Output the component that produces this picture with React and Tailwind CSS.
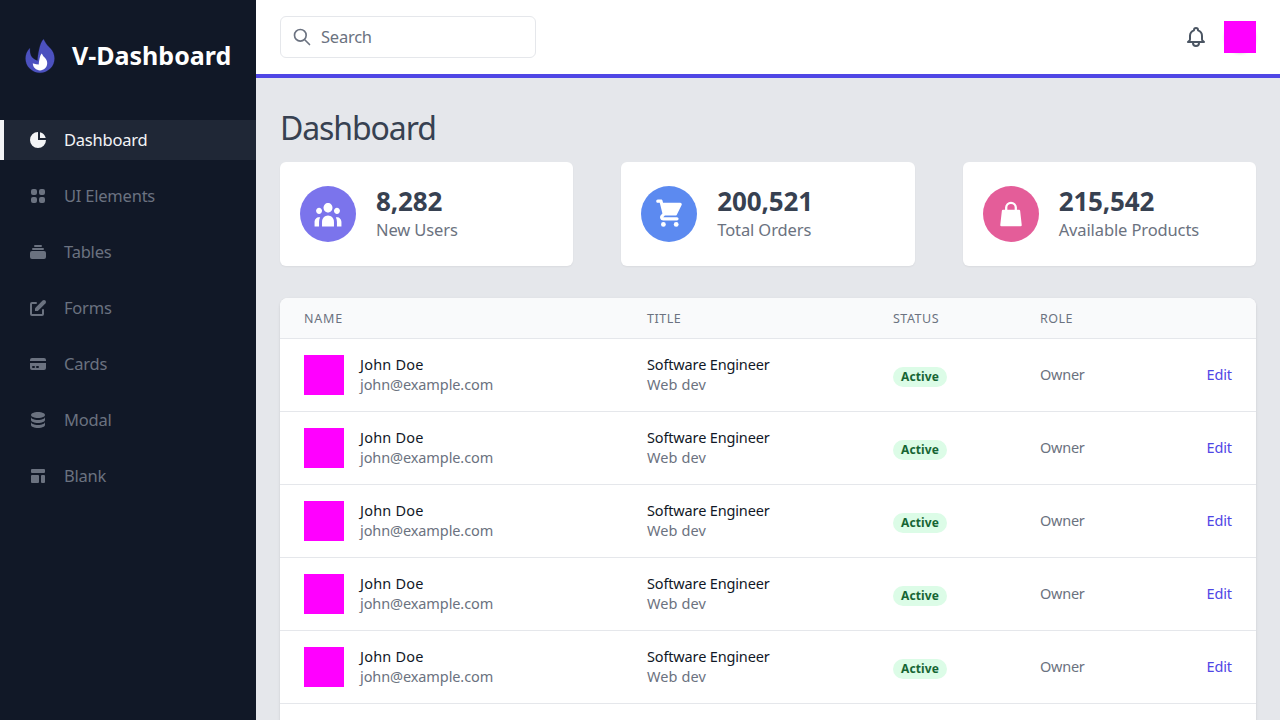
import React from 'react'

const navItems = [
  {
    label: 'Dashboard',
    active: true,
    paths: ['M2 10a8 8 0 018-8v8h8a8 8 0 11-16 0z', 'M12 2.252A8.014 8.014 0 0117.748 8H12V2.252z'],
  },
  {
    label: 'UI Elements',
    paths: [
      'M5 3a2 2 0 00-2 2v2a2 2 0 002 2h2a2 2 0 002-2V5a2 2 0 00-2-2H5zM5 11a2 2 0 00-2 2v2a2 2 0 002 2h2a2 2 0 002-2v-2a2 2 0 00-2-2H5zM11 5a2 2 0 012-2h2a2 2 0 012 2v2a2 2 0 01-2 2h-2a2 2 0 01-2-2V5zM11 13a2 2 0 012-2h2a2 2 0 012 2v2a2 2 0 01-2 2h-2a2 2 0 01-2-2v-2z',
    ],
  },
  {
    label: 'Tables',
    paths: [
      'M7 3a1 1 0 000 2h6a1 1 0 100-2H7zM4 7a1 1 0 011-1h10a1 1 0 110 2H5a1 1 0 01-1-1zM2 11a2 2 0 012-2h12a2 2 0 012 2v4a2 2 0 01-2 2H4a2 2 0 01-2-2v-4z',
    ],
  },
  {
    label: 'Forms',
    paths: [
      'M17.414 2.586a2 2 0 00-2.828 0L7 10.172V13h2.828l7.586-7.586a2 2 0 000-2.828z',
      'M2 6a2 2 0 012-2h4a1 1 0 010 2H4v10h10v-4a1 1 0 112 0v4a2 2 0 01-2 2H4a2 2 0 01-2-2V6z',
    ],
  },
  {
    label: 'Cards',
    paths: [
      'M4 4a2 2 0 00-2 2v1h16V6a2 2 0 00-2-2H4z',
      'M18 9H2v5a2 2 0 002 2h12a2 2 0 002-2V9zM4 13a1 1 0 011-1h1a1 1 0 110 2H5a1 1 0 01-1-1zm5-1a1 1 0 100 2h1a1 1 0 100-2H9z',
    ],
  },
  {
    label: 'Modal',
    paths: [
      'M3 12v3c0 1.657 3.134 3 7 3s7-1.343 7-3v-3c0 1.657-3.134 3-7 3s-7-1.343-7-3z',
      'M3 7v3c0 1.657 3.134 3 7 3s7-1.343 7-3V7c0 1.657-3.134 3-7 3S3 8.657 3 7z',
      'M17 5c0 1.657-3.134 3-7 3S3 6.657 3 5s3.134-3 7-3 7 1.343 7 3z',
    ],
  },
  {
    label: 'Blank',
    paths: [
      'M3 4a1 1 0 011-1h12a1 1 0 011 1v2a1 1 0 01-1 1H4a1 1 0 01-1-1V4zM3 10a1 1 0 011-1h6a1 1 0 011 1v6a1 1 0 01-1 1H4a1 1 0 01-1-1v-6zM14 9a1 1 0 00-1 1v6a1 1 0 001 1h2a1 1 0 001-1v-6a1 1 0 00-1-1h-2z',
    ],
  },
]

function Sidebar() {
  return (
    <aside className="w-64 shrink-0 bg-[#111827]">
      <div className="mt-8 flex items-center pl-4">
        <svg className="h-12 w-12" viewBox="0 0 512 512" fill="none">
          <path
            d="M364.61 390.213C304.625 450.196 207.37 450.196 147.386 390.213C117.394 360.22 102.398 320.911 102.398 281.6C102.398 242.291 117.394 202.981 147.386 172.989C147.386 230.4 153.6 281.6 230.4 307.2C230.4 256 256 102.4 294.4 76.7999C320 128 334.618 142.997 364.608 172.989C394.601 202.981 409.597 242.291 409.597 281.6C409.597 320.911 394.601 360.22 364.61 390.213Z"
            fill="#4C51BF"
            stroke="#4C51BF"
            strokeWidth="2"
          />
          <path
            d="M201.694 387.105C231.686 417.098 280.312 417.098 310.305 387.105C325.301 372.109 332.8 352.456 332.8 332.8C332.8 313.144 325.301 293.491 310.305 278.495C295.309 263.498 288 256 275.2 230.4C256 243.2 243.201 320 243.201 345.6C201.694 345.6 179.2 332.8 179.2 332.8C179.2 352.456 186.698 372.109 201.694 387.105Z"
            fill="white"
          />
        </svg>
        <span className="mx-2 pb-0.5 text-[25px] leading-[30px] font-bold text-white">V-Dashboard</span>
      </div>
      <nav className="mt-10 flex flex-col gap-4">
        {navItems.map((item) => (
          <a
            key={item.label}
            className={
              item.active
                ? 'flex items-center border-l-4 border-[#f3f4f6] bg-[#4b5563]/25 px-6 py-2 text-[#f3f4f6]'
                : 'flex items-center border-l-4 border-[#111827] px-6 py-2 text-[#6b7280]'
            }
          >
            <svg className="h-5 w-5" viewBox="0 0 20 20" fill="currentColor" fillRule="evenodd">
              {item.paths.map((d) => (
                <path key={d} d={d} />
              ))}
            </svg>
            <span className="mx-4 text-[16.5px] leading-6 tracking-[-0.22px]">{item.label}</span>
          </a>
        ))}
      </nav>
    </aside>
  )
}

function Header() {
  return (
    <header className="flex items-center justify-between border-b-4 border-[#4f46e5] bg-white px-6 py-4">
      <div className="flex w-64 items-center rounded-md border border-[#e5e7eb] py-2 pl-[11px]">
        <svg className="h-5 w-5 text-[#6b7280]" viewBox="0 0 24 24" fill="none">
          <path
            d="M21 21L15 15M17 10C17 13.866 13.866 17 10 17C6.13401 17 3 13.866 3 10C3 6.13401 6.13401 3 10 3C13.866 3 17 6.13401 17 10Z"
            stroke="currentColor"
            strokeWidth="2"
            strokeLinecap="round"
            strokeLinejoin="round"
          />
        </svg>
        <span className="ml-[9px] text-[16.5px] leading-6 tracking-[-0.24px] text-[#6b7280]">Search</span>
      </div>
      <div className="flex items-center">
        <svg className="mx-4 h-6 w-6 text-[#4b5563]" viewBox="0 0 24 24" fill="none">
          <path
            d="M15 17H20L18.5951 15.5951C18.2141 15.2141 18 14.6973 18 14.1585V11C18 8.38757 16.3304 6.16509 14 5.34142V5C14 3.89543 13.1046 3 12 3C10.8954 3 10 3.89543 10 5V5.34142C7.66962 6.16509 6 8.38757 6 11V14.1585C6 14.6973 5.78595 15.2141 5.40493 15.5951L4 17H9M15 17V18C15 19.6569 13.6569 21 12 21C10.3431 21 9 19.6569 9 18V17M15 17H9"
            stroke="currentColor"
            strokeWidth="2"
            strokeLinecap="round"
            strokeLinejoin="round"
          />
        </svg>
        <div className="h-8 w-8 rounded-full shadow-[0_1px_3px_0_rgba(0,0,0,0.1),0_1px_2px_-1px_rgba(0,0,0,0.1)]">
          <div className="h-8 w-8 bg-[#ff00ff]" />
        </div>
      </div>
    </header>
  )
}

function UsersIcon() {
  return (
    <svg className="h-8 w-8" viewBox="0 0 28 30" fill="currentColor">
      <path d="M18.2 9.08889C18.2 11.5373 16.3196 13.5222 14 13.5222C11.6804 13.5222 9.79999 11.5373 9.79999 9.08889C9.79999 6.64043 11.6804 4.65556 14 4.65556C16.3196 4.65556 18.2 6.64043 18.2 9.08889Z" />
      <path d="M25.2 12.0444C25.2 13.6768 23.9464 15 22.4 15C20.8536 15 19.6 13.6768 19.6 12.0444C19.6 10.4121 20.8536 9.08889 22.4 9.08889C23.9464 9.08889 25.2 10.4121 25.2 12.0444Z" />
      <path d="M19.6 22.3889C19.6 19.1243 17.0927 16.4778 14 16.4778C10.9072 16.4778 8.39999 19.1243 8.39999 22.3889V26.8222H19.6V22.3889Z" />
      <path d="M8.39999 12.0444C8.39999 13.6768 7.14639 15 5.59999 15C4.05359 15 2.79999 13.6768 2.79999 12.0444C2.79999 10.4121 4.05359 9.08889 5.59999 9.08889C7.14639 9.08889 8.39999 10.4121 8.39999 12.0444Z" />
      <path d="M22.4 26.8222V22.3889C22.4 20.8312 22.0195 19.3671 21.351 18.0949C21.6863 18.0039 22.0378 17.9556 22.4 17.9556C24.7197 17.9556 26.6 19.9404 26.6 22.3889V26.8222H22.4Z" />
      <path d="M6.64896 18.0949C5.98058 19.3671 5.59999 20.8312 5.59999 22.3889V26.8222H1.39999V22.3889C1.39999 19.9404 3.2804 17.9556 5.59999 17.9556C5.96219 17.9556 6.31367 18.0039 6.64896 18.0949Z" />
    </svg>
  )
}

function CartIcon() {
  return (
    <svg className="h-8 w-8" viewBox="0 0 28 28" fill="currentColor">
      <path d="M4.19999 1.4C3.4268 1.4 2.79999 2.02681 2.79999 2.8C2.79999 3.57319 3.4268 4.2 4.19999 4.2H5.9069L6.33468 5.91114C6.33917 5.93092 6.34409 5.95055 6.34941 5.97001L8.24953 13.5705L6.99992 14.8201C5.23602 16.584 6.48528 19.6 8.97981 19.6H21C21.7731 19.6 22.4 18.9732 22.4 18.2C22.4 17.4268 21.7731 16.8 21 16.8H8.97983L10.3798 15.4H19.6C20.1303 15.4 20.615 15.1004 20.8521 14.6261L25.0521 6.22609C25.2691 5.79212 25.246 5.27673 24.991 4.86398C24.7357 4.45123 24.2852 4.2 23.8 4.2H8.79308L8.35818 2.46044C8.20238 1.83722 7.64241 1.4 6.99999 1.4H4.19999Z" />
      <circle cx="20.3" cy="23.1" r="2.1" />
      <circle cx="9.1" cy="23.1" r="2.1" />
    </svg>
  )
}

function BagIcon() {
  return (
    <svg className="h-8 w-8" viewBox="0 0 28 28" fill="none" stroke="currentColor" strokeWidth="2">
      <path d="M6.99998 11.2H21L22.4 23.8H5.59998L6.99998 11.2Z" fill="currentColor" strokeLinejoin="round" />
      <path d="M9.79999 8.4C9.79999 6.08041 11.6804 4.2 14 4.2C16.3196 4.2 18.2 6.08041 18.2 8.4V12.6C18.2 14.9197 16.3196 16.8 14 16.8C11.6804 16.8 9.79999 14.9197 9.79999 12.6V8.4Z" />
    </svg>
  )
}

const stats = [
  { value: '8,282', label: 'New Users', Icon: UsersIcon, tone: 'bg-[#4f46e5]/75' },
  { value: '200,521', label: 'Total Orders', Icon: CartIcon, tone: 'bg-[#2563eb]/75' },
  { value: '215,542', label: 'Available Products', Icon: BagIcon, tone: 'bg-[#db2777]/75' },
]

function StatCard({ value, label, Icon, tone }) {
  return (
    <div className="flex items-center rounded-md bg-white px-5 py-6 shadow-[0_1px_2px_0_rgba(0,0,0,0.05)]">
      <div className={`rounded-full p-3 text-white ${tone}`}>
        <Icon />
      </div>
      <div className="mx-5">
        <h4 className="pb-0.5 text-[26px] leading-[30px] font-bold tracking-[-0.15px] text-[#374151]">{value}</h4>
        <div className="text-[16.5px] leading-6 tracking-[-0.12px] text-[#6b7280]">{label}</div>
      </div>
    </div>
  )
}

const users = Array.from({ length: 5 }, (_, id) => ({
  id,
  name: 'John Doe',
  email: 'john@example.com',
  title: 'Software Engineer',
  team: 'Web dev',
  status: 'Active',
  role: 'Owner',
}))

function UsersTable() {
  return (
    <div className="mt-8 h-[520px] overflow-hidden rounded-lg bg-white shadow-[0_1px_3px_0_rgba(0,0,0,0.1),0_1px_2px_-1px_rgba(0,0,0,0.1)]">
      <table className="w-full table-fixed">
        <colgroup>
          <col className="w-[343px]" />
          <col className="w-[246px]" />
          <col className="w-[147px]" />
          <col className="w-[140px]" />
          <col />
        </colgroup>
        <thead>
          <tr className="border-b border-[#e5e7eb] bg-[#f9fafb] text-left text-[12.5px] uppercase leading-4 tracking-[0.5px] text-[#6b7280]">
            <th className="px-6 pt-[13px] pb-[11px] font-normal tracking-[0.8px]">Name</th>
            <th className="px-6 pt-[13px] pb-[11px] font-normal">Title</th>
            <th className="px-6 pt-[13px] pb-[11px] font-normal">Status</th>
            <th className="px-6 pt-[13px] pb-[11px] font-normal">Role</th>
            <th className="px-6 pt-[13px] pb-[11px]" />
          </tr>
        </thead>
        <tbody>
          {users.map((u) => (
            <tr key={u.id} className="border-b border-[#e5e7eb] text-[14.5px] leading-5 tracking-[-0.1px] text-[#6b7280]">
              <td className="px-6 py-4">
                <div className="flex items-center">
                  <div className="h-10 w-10 shrink-0 bg-[#ff00ff]" />
                  <div className="-mt-0.5 ml-4">
                    <div className="tracking-[0.2px] text-[#111827]">{u.name}</div>
                    <div>{u.email}</div>
                  </div>
                </div>
              </td>
              <td className="px-6 pt-[15px] pb-[17px]">
                <div className="tracking-[-0.15px] text-[#111827]">{u.title}</div>
                <div className="tracking-[0.1px]">{u.team}</div>
              </td>
              <td className="px-6 py-4 text-base tracking-[0px]">
                <span className="inline-flex rounded-full bg-[#dcfce7] px-2 text-xs font-bold leading-5 tracking-[0.12px] text-[#166534]">
                  {u.status}
                </span>
              </td>
              <td className="px-6 pt-4 pb-[18px] tracking-[-0.25px]">{u.role}</td>
              <td className="px-6 pt-4 pb-[18px] text-right tracking-[-0.1px] text-[#4f46e5]">Edit</td>
            </tr>
          ))}
        </tbody>
      </table>
    </div>
  )
}

export default function App() {
  return (
    <div className="flex h-screen overflow-hidden bg-[#e5e7eb] font-['Noto_Sans',sans-serif]">
      <Sidebar />
      <div className="flex flex-1 flex-col overflow-hidden">
        <Header />
        <main className="flex-1 overflow-hidden px-6 py-8">
          <h3 className="text-[32px] leading-9 font-normal tracking-[-1.1px] text-[#374151]">Dashboard</h3>
          <div className="mt-4 grid grid-cols-3 gap-12">
            {stats.map((s) => (
              <StatCard key={s.label} {...s} />
            ))}
          </div>
          <UsersTable />
        </main>
      </div>
    </div>
  )
}
